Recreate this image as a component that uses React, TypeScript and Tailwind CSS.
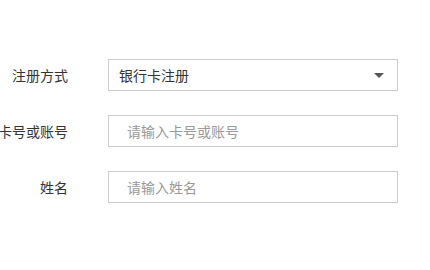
import React from 'react';

const font = { fontFamily: '"Noto Sans CJK SC", "Noto Sans", sans-serif' };

function Row({ label, children }: { label: string; children: React.ReactNode }) {
  return (
    <div className="flex items-center">
      <div className="flex w-[68px] shrink-0 justify-end whitespace-nowrap text-[14px] text-[#333]">
        {label}
      </div>
      <div className="ml-[40px]">{children}</div>
    </div>
  );
}

export default function App() {
  return (
    <div className="h-[270px] w-[430px] overflow-hidden bg-white" style={font}>
      <div className="flex flex-col gap-[24px] pt-[59px]">
        <Row label="注册方式">
          <div className="flex h-[32px] w-[290px] items-center justify-between border border-[#ccc] pl-[10px] pr-[13px] text-[14px] text-[#333]">
            <span>银行卡注册</span>
            <span className="h-0 w-0 border-x-[5px] border-t-[5px] border-x-transparent border-t-[#555]" />
          </div>
        </Row>
        <Row label="银行卡号或账号">
          <input
            className="h-[32px] w-[290px] border border-[#ccc] px-[18px] text-[14px] text-[#333] outline-none placeholder:text-[#999]"
            placeholder="请输入卡号或账号"
            style={font}
          />
        </Row>
        <Row label="姓名">
          <input
            className="h-[32px] w-[290px] border border-[#ccc] px-[18px] text-[14px] text-[#333] outline-none placeholder:text-[#999]"
            placeholder="请输入姓名"
            style={font}
          />
        </Row>
      </div>
    </div>
  );
}
